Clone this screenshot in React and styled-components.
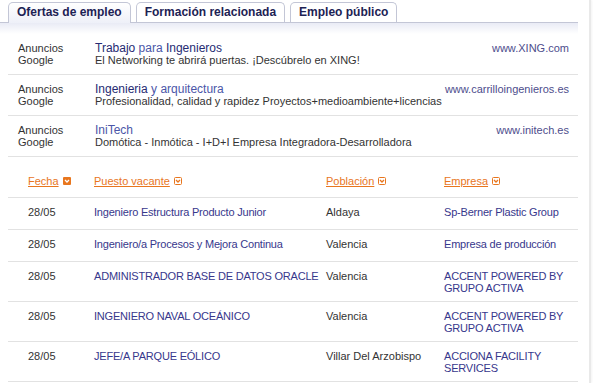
import React from 'react'
import styled, { createGlobalStyle } from 'styled-components'

const ads = [
    {
        title: [['Trabajo', true], [' para ', false], ['Ingenieros', true]],
        desc: 'El Networking te abrirá puertas. ¡Descúbrelo en XING!',
        url: 'www.XING.com',
    },
    {
        title: [['Ingenieria', true], [' y arquitectura', false]],
        desc: 'Profesionalidad, calidad y rapidez Proyectos+medioambiente+licencias',
        url: 'www.carrilloingenieros.es',
    },
    {
        title: [['IniTech', false]],
        desc: 'Domótica - Inmótica - I+D+I Empresa Integradora-Desarrolladora',
        url: 'www.initech.es',
    },
]

const jobs = [
    ['28/05', 'Ingeniero Estructura Producto Junior', 'Aldaya', 'Sp-Berner Plastic Group'],
    ['28/05', 'Ingeniero/a Procesos y Mejora Continua', 'Valencia', 'Empresa de producción'],
    ['28/05', 'ADMINISTRADOR BASE DE DATOS ORACLE', 'Valencia', 'ACCENT POWERED BY GRUPO ACTIVA'],
    ['28/05', 'INGENIERO NAVAL OCEÁNICO', 'Valencia', 'ACCENT POWERED BY GRUPO ACTIVA'],
    ['28/05', 'JEFE/A PARQUE EÓLICO', 'Villar Del Arzobispo', 'ACCIONA FACILITY SERVICES'],
]

const columns = [
    { label: 'Fecha', active: true },
    { label: 'Puesto vacante' },
    { label: 'Población' },
    { label: 'Empresa' },
]

const SortIcon = ({ active }) => (
    <svg width="8" height="8" viewBox="0 0 8 8">
        {active
            ? <rect x="0" y="0" width="8" height="8" rx="1" fill="#e8761e" />
            : <rect x="0.5" y="0.5" width="7" height="7" rx="1" fill="#fff" stroke="#e8761e" />}
        <path d="M2 3 L4 5 L6 3" fill="none" stroke={active ? '#fff' : '#e8761e'} strokeWidth="1.3" />
    </svg>
)

export default () => {
    return (
        <>
            <GlobalStyle />
            <Page>
                <Header>
                    <TabBar>
                        <Tab active>Ofertas de empleo</Tab>
                        <Tab>Formación relacionada</Tab>
                        <Tab>Empleo público</Tab>
                    </TabBar>
                    <Band />
                </Header>
                <AdList>
                    {ads.map((ad) => (
                        <AdRow key={ad.url}>
                            <AdLabel>Anuncios<br />Google</AdLabel>
                            <div>
                                <AdTitle>
                                    {ad.title.map(([text, key], i) => (
                                        <Keyword key={i} strong={key}>{text}</Keyword>
                                    ))}
                                </AdTitle>
                                <AdDesc>{ad.desc}</AdDesc>
                            </div>
                            <AdUrl>{ad.url}</AdUrl>
                        </AdRow>
                    ))}
                </AdList>
                <Table>
                    <HeadRow>
                        {columns.map((c) => (
                            <HeadCell key={c.label}>
                                <SortLink>{c.label}</SortLink>
                                <SortIcon active={c.active} />
                            </HeadCell>
                        ))}
                    </HeadRow>
                    {jobs.map((job, i) => (
                        <Row key={i}>
                            <Cell>{job[0]}</Cell>
                            <Cell link>{job[1]}</Cell>
                            <Cell>{job[2]}</Cell>
                            <Cell link>{job[3]}</Cell>
                        </Row>
                    ))}
                </Table>
            </Page>
        </>
    );
}

const GlobalStyle = createGlobalStyle`
    body {
        margin: 0;
        background: #fff;
        font-family: "Liberation Sans", Arial, sans-serif;
    }
`
const Page = styled.div`
    width: 589px;
    min-height: 383px;
    border-right: 2px solid #e9e9e9;
    box-shadow: 1px 0 2px rgba(0, 0, 0, 0.05);
`
const Header = styled.div`
    width: 578px;
    padding-top: 2px;
`
const TabBar = styled.div`
    display: flex;
    gap: 5px;
    padding-left: 8px;
`
const Tab = styled.div`
    position: relative;
    z-index: 1;
    height: ${p => p.active ? '21px' : '20px'};
    margin-bottom: ${p => p.active ? '-1px' : '0'};
    padding: 0 8px;
    box-sizing: border-box;
    border: 1px solid #c3c6d6;
    border-bottom: none;
    border-radius: 5px 5px 0 0;
    background: ${p => p.active ? 'linear-gradient(#fff, #eef0f8)' : '#fff'};
    color: #1d2254;
    font-size: 12px;
    font-weight: bold;
    line-height: 19px;
`
const Band = styled.div`
    height: 11px;
    border-top: 1px solid #c3c6d6;
    background: linear-gradient(#e9ebf5, #fff);
`
const AdList = styled.div`
    width: 570px;
    margin-left: 8px;
`
const AdRow = styled.div`
    display: grid;
    grid-template-columns: 77px 1fr auto;
    padding: 8px 9px 8px 10px;
    border-bottom: 1px solid #e2e2e2;
    font-size: 11px;
    line-height: 12px;
`
const AdLabel = styled.div`
    color: #333;
`
const AdTitle = styled.div`
    font-size: 12px;
    line-height: 12px;
`
const Keyword = styled.span`
    color: ${p => p.strong ? '#262b73' : '#4b56a8'};
`
const AdDesc = styled.div`
    color: #333;
`
const AdUrl = styled.div`
    color: #4d4d8c;
`
const Table = styled.div`
    width: 570px;
    margin: 6px 0 0 8px;
`
const HeadRow = styled.div`
    display: grid;
    grid-template-columns: 66px 232px 118px 1fr;
    padding: 12px 8px 10px 20px;
    border-bottom: 1px solid #e2e2e2;
    font-size: 11px;
    line-height: 12px;
`
const HeadCell = styled.div`
    display: flex;
    align-items: center;
    gap: 4px;
`
const SortLink = styled.span`
    color: #e8761e;
    text-decoration: underline;
`
const Row = styled.div`
    display: grid;
    grid-template-columns: 66px 232px 118px 1fr;
    box-sizing: border-box;
    min-height: 32px;
    padding: 8px 8px 7px 20px;
    border-bottom: 1px solid #e2e2e2;
    font-size: 11px;
    line-height: 12px;
`
const Cell = styled.div`
    color: ${p => p.link ? '#37378c' : '#333'};
    letter-spacing: ${p => p.link ? '-0.2px' : '0'};
`
